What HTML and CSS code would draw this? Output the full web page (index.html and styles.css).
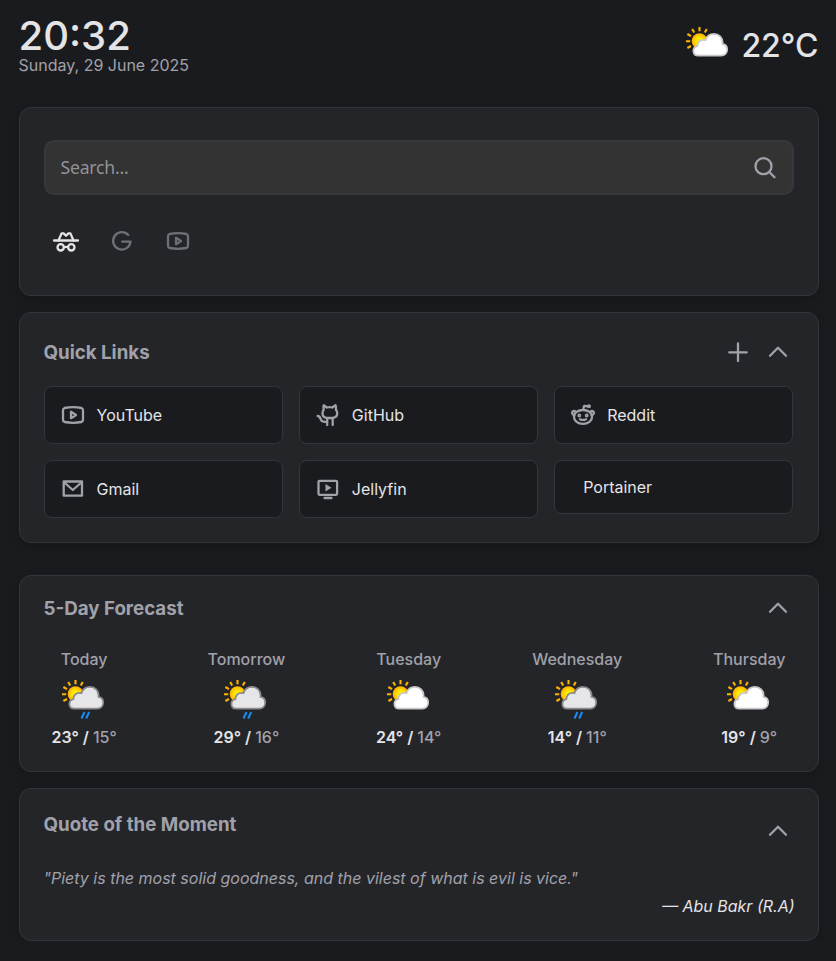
FILE: index.html
```html
<!DOCTYPE html>
<html lang="en">
<head>
<meta charset="utf-8">
<title>Start page</title>
<link rel="stylesheet" href="styles.css">
</head>
<body>
<svg class="defs" aria-hidden="true">
  <defs>
    <radialGradient id="sunfill"><stop offset=".35" stop-color="#ffee00"/><stop offset="1" stop-color="#ffae00"/></radialGradient>
    <symbol id="sun" viewBox="0 0 44 42">
      <circle cx="14.5" cy="15" r="7.8" fill="url(#sunfill)"/>
      <path d="M14.5 1v4.2M7.200 3l2 3.600M21.800 3l-2 3.600M2.400 8l3.600 2.200M1 15.200h4.200M2.400 22l3.600-2" stroke="#fdb400" stroke-width="2.100" fill="none"/>
    </symbol>
    <symbol id="cloud" viewBox="0 0 44 42">
      <path d="M13.500 29.700C10.400 29.700 8.400 27.700 8.400 25C8.400 22.500 10.200 20.700 12.300 20.200C12.300 16.500 15 13.900 18.400 13.900C19.100 13.900 19.800 14 20.400 14.200C21.600 10.400 24.900 7.900 29 7.900C34 7.900 37.600 11.500 37.600 16.400C37.600 16.900 37.600 17.400 37.500 17.900C40.400 18.300 42.200 20.700 42.200 23.600C42.200 27.100 39.700 29.700 36.300 29.700Z" stroke-width="1.800"/>
    </symbol>
    <symbol id="partly" viewBox="0 0 44 42"><use href="#sun"/><use href="#cloud" fill="#fff" stroke="#c8c8c8"/></symbol>
    <symbol id="rain" viewBox="0 0 44 42"><use href="#sun"/><use href="#cloud" fill="#e6e6e8" stroke="#8b8b8d"/><path d="M23.500 33l-3 6.500M28.200 33l-3 6.500" stroke="#1b8af3" stroke-width="2.100"/></symbol>
    <symbol id="youtube" viewBox="0 0 24 24"><path d="M3.500 5Q12 3.400 20.500 5Q22 5.500 22 7.500V16.500Q22 18.500 20.500 19Q12 20.600 3.500 19Q2 18.500 2 16.500V7.500Q2 5.500 3.500 5Z"/><path d="M10 8.800v6.400l5-3.200z"/></symbol>
    <symbol id="chevron" viewBox="0 0 24 24"><path d="M4 15.700l8-8 8 8"/></symbol>
  </defs>
</svg>
<header class="top">
  <div>
    <div class="time">20:32</div>
    <div class="date">Sunday, 29 June 2025</div>
  </div>
  <div class="now"><svg class="weather"><use href="#partly"/></svg><span>22°C</span></div>
</header>
<main>
  <section class="card search-card">
    <div class="search"><input type="text" placeholder="Search..."><svg class="icon" viewBox="0 0 24 24"><circle cx="10.500" cy="10.200" r="8"/><path d="M16.300 16l5.200 5.200"/></svg></div>
    <div class="engines">
      <svg class="engine active" viewBox="0 0 28 24"><path d="M2 11.500h24"/><path d="M6.500 11.500L9.600 4.400h2l2.400 2.300 2.400-2.300h2l3.100 7.100"/><circle cx="8.700" cy="18.300" r="3.200"/><circle cx="19.300" cy="18.300" r="3.200"/><path d="M11.900 18.300q2.100-1 4.200 0"/></svg>
      <svg class="engine" viewBox="0 0 28 24"><path d="M20.300 6A8.700 8.700 0 1 0 22.500 12.600H14.200"/></svg>
      <svg class="engine" viewBox="0 0 28 24"><use href="#youtube" x="2" width="24" height="24"/></svg>
    </div>
  </section>
  <section class="card links-card">
    <div class="head"><h2>Quick Links</h2><div class="actions"><button aria-label="Add"><svg class="icon" viewBox="0 0 24 24"><path d="M12 3.500v17.500M3.200 12.300h17.600"/></svg></button><button aria-label="Collapse"><svg class="icon"><use href="#chevron"/></svg></button></div></div>
    <div class="links">
      <a class="link"><svg class="icon"><use href="#youtube"/></svg>YouTube</a>
      <a class="link"><svg class="icon" viewBox="0 0 24 24"><path d="M7.700 2.300l3.100 2.200q2.700-.6 5.400 0l3.300-2.200q.8 2 .4 4.200 1.300 1.800 1.300 3.900 0 4-5 4.600H11q-4.500-.6-4.500-4.600 0-2.100 1.200-3.900-.5-2.200 0-4.200z"/><path d="M11.200 15.500v6.500M16.700 15.500v6.500M1.700 13c3 0 2.200 3.300 4.200 5q2 1.200 5 .8"/></svg>GitHub</a>
      <a class="link"><svg class="icon" viewBox="0 0 24 24"><path d="M12 7c5.200 0 9 2.800 9 6.900s-3.800 7-9 7-9-2.900-9-7 3.800-6.900 9-6.900zM12 7l1.200-4.200 4.500.6"/><path d="M4.700 9Q3.200 7.300 1.600 8.700Q.2 10.700 3.200 12.500M19.300 9q1.500-1.700 3.100-.3Q23.800 10.700 20.800 12.500M9 16.200q3 1.500 6 0"/><circle cx="8.300" cy="12.500" r=".8"/><circle cx="15.700" cy="12.500" r=".8"/><circle cx="18" cy="3.300" r=".8"/></svg>Reddit</a>
      <a class="link"><svg class="icon" viewBox="0 0 24 24"><path d="M2.700 4.500h18.300v14.200H2.700z"/><path d="M3.300 5.500l8.500 7.500L20.400 5.500"/></svg>Gmail</a>
      <a class="link"><svg class="icon" viewBox="0 0 24 24"><rect x="2.500" y="3.800" width="18.600" height="14" rx="1"/><path d="M8.500 21h7"/><path class="solid" d="M9.500 7v7.500l6-3.750z"/></svg>Jellyfin</a>
      <a class="link bare">Portainer</a>
    </div>
  </section>
  <section class="card forecast-card">
    <div class="head"><h2>5-Day Forecast</h2><button aria-label="Collapse"><svg class="icon"><use href="#chevron"/></svg></button></div>
    <div class="days">
      <div class="day"><span>Today</span><svg class="weather"><use href="#rain"/></svg><b>23° / <i>15°</i></b></div>
      <div class="day"><span>Tomorrow</span><svg class="weather"><use href="#rain"/></svg><b>29° / <i>16°</i></b></div>
      <div class="day"><span>Tuesday</span><svg class="weather"><use href="#partly"/></svg><b>24° / <i>14°</i></b></div>
      <div class="day"><span>Wednesday</span><svg class="weather"><use href="#rain"/></svg><b>14° / <i>11°</i></b></div>
      <div class="day"><span>Thursday</span><svg class="weather"><use href="#partly"/></svg><b>19° / <i>9°</i></b></div>
    </div>
  </section>
  <section class="card quote-card">
    <div class="head"><h2>Quote of the Moment</h2><button aria-label="Collapse"><svg class="icon"><use href="#chevron"/></svg></button></div>
    <p class="quote">"Piety is the most solid goodness, and the vilest of what is evil is vice."</p>
    <p class="author">— Abu Bakr (R.A)</p>
  </section>
</main>
</body>
</html>
```

FILE: styles.css
```css
* { box-sizing: border-box; }
body { margin: 0; padding: 0 17.5px 0 18.5px; background: #1a1b1e; color: #e4e4e7; font: 16px/normal Inter, sans-serif; overflow: hidden; }
.defs { position: absolute; width: 0; height: 0; }
h2, p { margin: 0; }
svg { display: block; flex: none; }
.top { height: 107px; padding-top: 16px; display: flex; justify-content: space-between; }
.time { font-size: 40px; font-weight: 500; line-height: 40px; }
.date { color: #a1a1aa; line-height: 19px; }
.now { display: flex; align-items: flex-start; gap: 12px; font-size: 32px; font-weight: 500; line-height: 60px; }
.now .weather { margin-top: 10px; }
.weather { width: 44px; height: 42px; }
.card { background: #242529; border: 1px solid #34353a; border-radius: 12px; padding: 24px; margin-bottom: 16px; box-shadow: 0 4px 12px rgba(0, 0, 0, .15); }
.icon, .engine { width: 24px; height: 24px; fill: none; stroke: #a1a1aa; stroke-width: 2.3; stroke-linecap: round; stroke-linejoin: round; }
.solid { fill: #a1a1aa; stroke: none; }
.search-card { height: 189px; padding-top: 32px; }
.search { height: 55px; border: 2px solid #37383d; border-radius: 10px; background: #333; display: flex; align-items: center; padding: 0 15px; }
.search input { flex: 1; min-width: 0; padding: 0 0 2px; border: 0; outline: 0; background: none; font: 17.6px "Noto Sans", sans-serif; letter-spacing: -.2px; }
.search input::placeholder { color: #929297; opacity: 1; }
.engines { display: flex; gap: 28px; padding: 34px 0 0 8px; }
.engine { width: 28px; stroke: #6f7077; }
.engine.active { stroke: #e4e4e7; }
.head { display: flex; justify-content: space-between; align-items: center; height: 32px; }
h2 { font-size: 18.72px; font-weight: 700; color: #a1a1aa; }
.actions { display: flex; gap: 8px; }
button { width: 32px; height: 32px; padding: 0; border: 0; background: none; display: flex; align-items: center; justify-content: center; }
.links-card { height: 231px; padding-top: 23px; margin-bottom: 32px; }
.links { display: grid; grid-template-columns: repeat(3, 1fr); gap: 16px; margin-top: 18px; align-items: start; }
.link { display: flex; align-items: center; gap: 12px; padding: 16px; background: #1a1b1e; border: 1px solid #34353a; border-radius: 8px; }
.bare { padding-left: 28px; height: 54px; }
.forecast-card { height: 197px; padding-top: 16px; }
.days { display: flex; justify-content: space-between; margin-top: 25px; }
.day { display: flex; flex-direction: column; align-items: center; padding: 0 8px; font-weight: 500; color: #a1a1aa; }
.day .weather { margin: 10px 2px 6px 0; }
.day b { font-weight: 600; color: #e4e4e7; }
.day i { font-style: normal; font-weight: 500; color: #a1a1aa; }
.quote-card { height: 153px; margin: 0; }
.quote-card .head { margin-top: 2px; }
.quote-card h2 { margin-top: -14px; }
.quote { font-style: italic; color: #a1a1aa; margin-top: 21px; }
.author { font-style: italic; text-align: right; margin: 8px -1px 0 0; }
```
